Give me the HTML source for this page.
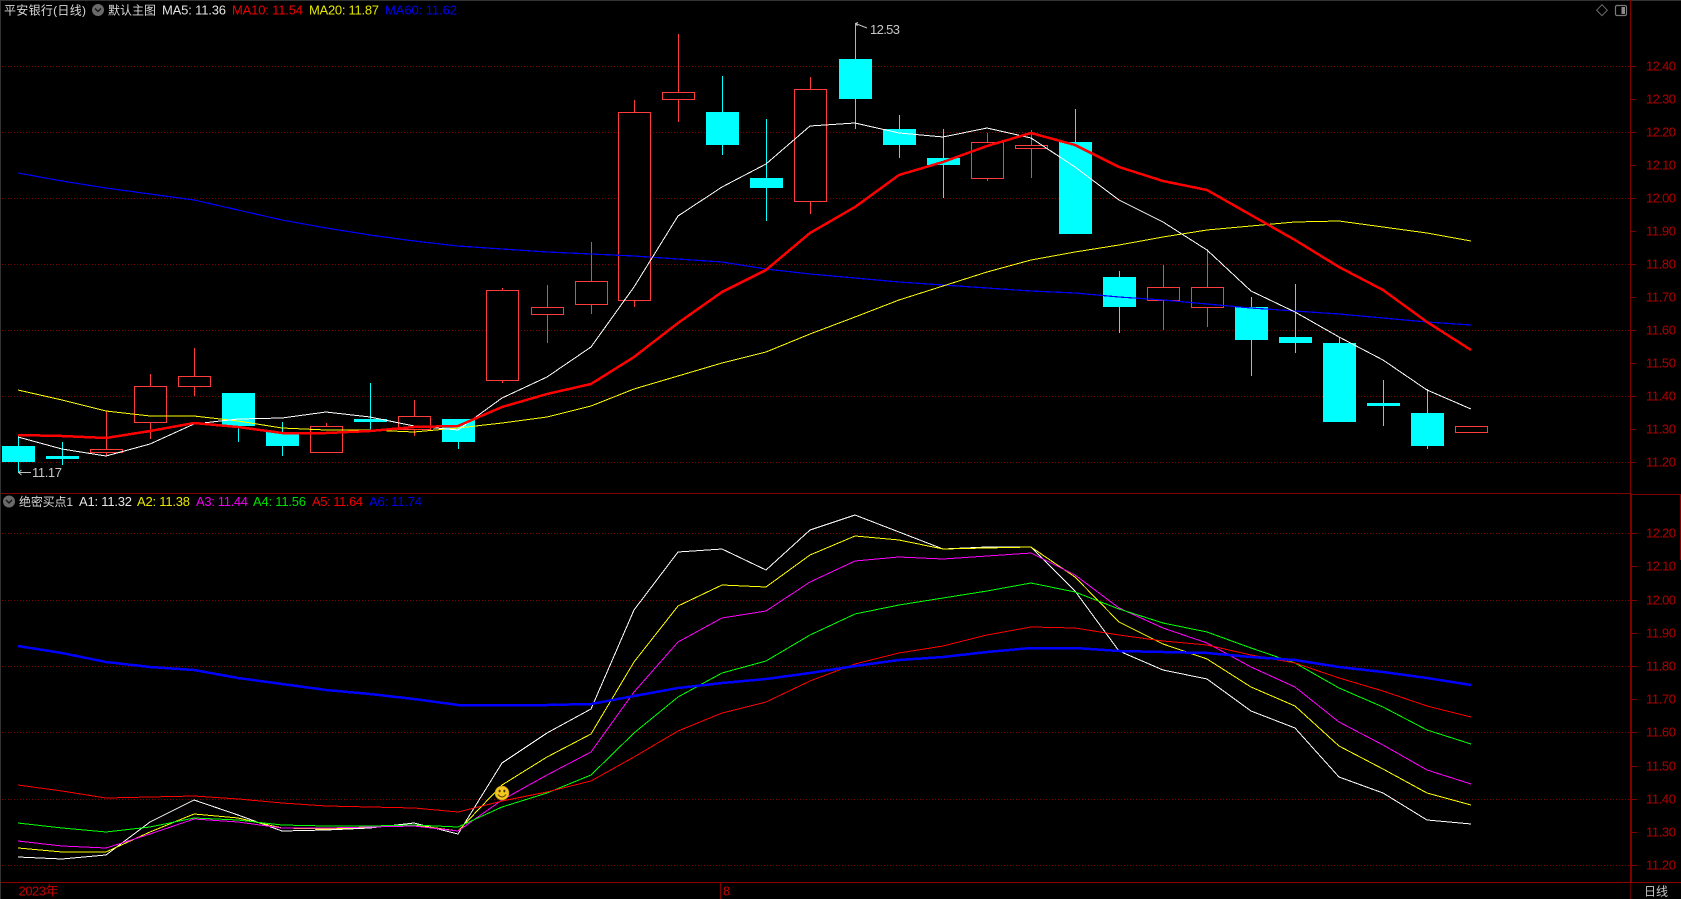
<!DOCTYPE html>
<html lang="zh">
<head>
<meta charset="utf-8">
<title>平安银行(日线)</title>
<style>
html,body{margin:0;padding:0;background:#000;width:1681px;height:899px;overflow:hidden}
svg{display:block;position:absolute;left:0;top:0}
text{font-family:"Liberation Sans","Noto Sans CJK SC",sans-serif;font-size:13px}
.g{stroke:#800000;stroke-width:1;stroke-dasharray:1 2;fill:none}
.l{fill:none;stroke-width:1;shape-rendering:crispEdges;stroke-linejoin:round}
.c{shape-rendering:crispEdges}
.ax text{fill:#b00000;font-size:13px}
</style>
</head>
<body>
<svg width="1681" height="899" viewBox="0 0 1681 899" xmlns="http://www.w3.org/2000/svg">
<rect width="1681" height="899" fill="#000"/>
<!-- frame -->
<g class="c">
<rect x="0" y="0" width="1681" height="1" fill="#333"/>
<rect x="0" y="0" width="1" height="899" fill="#333"/>
<rect x="1630" y="0" width="1" height="494" fill="#800000"/>
<rect x="1630" y="494" width="2" height="388" fill="#800000"/>
<rect x="1630" y="882" width="1" height="17" fill="#600000"/>
<rect x="1" y="493" width="1630" height="1" fill="#800000"/>
<rect x="1631" y="494" width="50" height="1" fill="#800000"/>
<rect x="1680" y="494" width="1" height="66" fill="#800000"/>
<rect x="1" y="882" width="1680" height="1" fill="#900000"/>
<rect x="720" y="882" width="1" height="17" fill="#800000"/>
</g>
<!-- grid -->
<g class="c">
<path class="g" d="M2 66.5H1630M2 132.5H1630M2 198.5H1630M2 264.5H1630M2 330.5H1630M2 396.5H1630M2 462.5H1630M2 533.5H1630M2 600.5H1630M2 666.5H1630M2 732.5H1630M2 799.5H1630M2 865.5H1630"/>
<path stroke="#800000" stroke-width="1" fill="none" d="M1631 66.5h5M1631 99.5h5M1631 132.5h5M1631 165.5h5M1631 198.5h5M1631 231.5h5M1631 264.5h5M1631 297.5h5M1631 330.5h5M1631 363.5h5M1631 396.5h5M1631 429.5h5M1631 462.5h5M1632 533.5h5M1632 566.5h5M1632 600.5h5M1632 633.5h5M1632 666.5h5M1632 699.5h5M1632 732.5h5M1632 766.5h5M1632 799.5h5M1632 832.5h5M1632 865.5h5"/>
</g>
<!-- axis labels -->
<g class="ax">
<text x="1646" y="70.5" textLength="30">12.40</text>
<text x="1646" y="103.5" textLength="30">12.30</text>
<text x="1646" y="136.5" textLength="30">12.20</text>
<text x="1646" y="169.5" textLength="30">12.10</text>
<text x="1646" y="202.5" textLength="30">12.00</text>
<text x="1646" y="235.5" textLength="30">11.90</text>
<text x="1646" y="268.5" textLength="30">11.80</text>
<text x="1646" y="301.5" textLength="30">11.70</text>
<text x="1646" y="334.5" textLength="30">11.60</text>
<text x="1646" y="367.5" textLength="30">11.50</text>
<text x="1646" y="400.5" textLength="30">11.40</text>
<text x="1646" y="433.5" textLength="30">11.30</text>
<text x="1646" y="466.5" textLength="30">11.20</text>
<text x="1646" y="537.5" textLength="30">12.20</text>
<text x="1646" y="570.5" textLength="30">12.10</text>
<text x="1646" y="604.5" textLength="30">12.00</text>
<text x="1646" y="637.5" textLength="30">11.90</text>
<text x="1646" y="670.5" textLength="30">11.80</text>
<text x="1646" y="703.5" textLength="30">11.70</text>
<text x="1646" y="736.5" textLength="30">11.60</text>
<text x="1646" y="770.5" textLength="30">11.50</text>
<text x="1646" y="803.5" textLength="30">11.40</text>
<text x="1646" y="836.5" textLength="30">11.30</text>
<text x="1646" y="869.5" textLength="30">11.20</text>
<text x="18.5" y="895.5" textLength="40" style="fill:#c00000">2023年</text>
<text x="723" y="895.5" style="fill:#c00000">8</text>
</g>
<text x="1644" y="895.5" textLength="24" fill="#c8c8c8" style="font-size:12px">日线</text>
<!-- red wicks -->
<path class="c" fill="none" stroke="#ff3c3c" stroke-width="1" d="M106.5 411V456M150.5 374V439M194.5 348V396M326.5 423V453M414.5 400V436M502.5 288V383M547.5 285V343M591.5 242V314M634.5 100V307M678.5 34V122M810.5 77V214M987.5 133V181M1031.5 130V178M1163.5 265V330M1207.5 249V327"/>
<!-- cyan wicks -->
<path class="c" fill="none" stroke="#00ffff" stroke-width="1" d="M18.5 435V473M62.5 442V465M238.5 393V442M282.5 422V456M370.5 383V430M458.5 419V449M722.5 76V155M766.5 119V221M855.5 23V129M899.5 115V158M943.5 129V198M1075.5 109V234M1119.5 271V333M1251.5 297V376M1295.5 284V353M1339.5 337V422M1383.5 380V426M1427.5 389V449"/>
<!-- red bodies -->
<g class="c" fill="#000" stroke="#ff3c3c" stroke-width="1">
<rect x="90.5" y="449.5" width="32" height="3"/>
<rect x="134.5" y="386.5" width="32" height="36"/>
<rect x="178.5" y="376.5" width="32" height="10"/>
<rect x="310.5" y="426.5" width="32" height="26"/>
<rect x="398.5" y="416.5" width="32" height="13"/>
<rect x="486.5" y="290.5" width="32" height="90"/>
<rect x="531.5" y="307.5" width="32" height="7"/>
<rect x="575.5" y="281.5" width="32" height="23"/>
<rect x="618.5" y="112.5" width="32" height="188"/>
<rect x="662.5" y="92.5" width="32" height="7"/>
<rect x="794.5" y="89.5" width="32" height="112"/>
<rect x="971.5" y="142.5" width="32" height="36"/>
<rect x="1015.5" y="145.5" width="32" height="3"/>
<rect x="1147.5" y="287.5" width="32" height="13"/>
<rect x="1191.5" y="287.5" width="32" height="20"/>
<rect x="1455.5" y="426.5" width="32" height="6"/>
</g>
<!-- cyan bodies -->
<g class="c" fill="#00ffff">
<rect x="2" y="446" width="33" height="16"/>
<rect x="46" y="456" width="33" height="3"/>
<rect x="222" y="393" width="33" height="33"/>
<rect x="266" y="432" width="33" height="14"/>
<rect x="354" y="419" width="33" height="3"/>
<rect x="442" y="419" width="33" height="23"/>
<rect x="706" y="112" width="33" height="33"/>
<rect x="750" y="178" width="33" height="10"/>
<rect x="839" y="59" width="33" height="40"/>
<rect x="883" y="129" width="33" height="16"/>
<rect x="927" y="158" width="33" height="7"/>
<rect x="1059" y="142" width="33" height="92"/>
<rect x="1103" y="277" width="33" height="30"/>
<rect x="1235" y="307" width="33" height="33"/>
<rect x="1279" y="337" width="33" height="6"/>
<rect x="1323" y="343" width="33" height="79"/>
<rect x="1367" y="403" width="33" height="3"/>
<rect x="1411" y="413" width="33" height="33"/>
</g>
<!-- MA lines -->
<polyline class="l" stroke="#0000ff" style="stroke-width:1.2" points="18,173 62,181 106,188 150,194 194,200 238,210 282,220 326,228 370,235 414,241 458,246 502,249 547,252 591,254 634,256 678,259 722,262 766,269 810,274 855,278 899,282 943,285 987,288 1031,291 1075,293 1119,297 1163,300 1207,304 1251,308 1295,311 1339,314 1383,318 1427,322 1471,325"/>
<polyline class="l" stroke="#ffff00" points="18,390 62,400 106,411 150,416 194,416 238,421 282,428 326,430 370,430 414,432 458,428 502,423 547,417 591,406 634,389 678,376 722,363 766,352 810,334 855,317 899,300 943,286 987,272 1031,260 1075,252 1119,245 1163,237 1207,230 1251,226 1295,222 1339,221 1383,227 1427,233 1471,241"/>
<polyline class="l" stroke="#ffffff" points="18,437 62,449 106,456 150,444 194,424 238,419 282,418 326,412 370,417 414,426 458,430 502,398 547,377 591,347 634,287 678,216 722,187 766,164 810,126 855,123 899,133 943,137 987,128 1031,138 1075,167 1119,200 1163,222 1207,250 1251,291 1295,312 1339,337 1383,360 1427,390 1471,409"/>
<polyline class="l" stroke="#ff0000" style="stroke-width:2.5" points="18,435 62,436 106,438 150,431 194,423 238,427 282,433 326,433 370,431 414,427 458,426 502,407 547,394 591,384 634,357 678,323 722,292 766,270 810,233 855,207 899,175 943,162 987,146 1031,133 1075,145 1119,167 1163,181 1207,190 1251,215 1295,240 1339,267 1383,290 1427,322 1471,350"/>
<!-- sub-panel lines -->
<polyline class="l" stroke="#ffffff" points="18,857 62,859 106,855 150,822 194,800 238,815 282,831 326,830 370,828 414,823 458,834 502,763 547,733 591,709 634,610 678,552 722,549 766,570 810,530 855,515 899,532 943,549 987,547 1031,547 1075,591 1119,651 1163,670 1207,679 1251,711 1295,728 1339,777 1383,793 1427,820 1471,824"/>
<polyline class="l" stroke="#ffff00" points="18,848 62,852 106,852 150,832 194,814 238,818 282,828 326,829 370,827 414,825 458,831 502,785 547,757 591,734 634,662 678,606 722,585 766,587 810,555 855,536 899,540 943,549 987,548 1031,547 1075,577 1119,622 1163,644 1207,659 1251,687 1295,706 1339,746 1383,769 1427,793 1471,805"/>
<polyline class="l" stroke="#ff00ff" points="18,841 62,846 106,848 150,834 194,819 238,822 282,828 326,828 370,827 414,826 458,831 502,800 547,775 591,752 634,692 678,642 722,618 766,611 810,582 855,561 899,557 943,559 987,556 1031,553 1075,575 1119,608 1163,628 1207,643 1251,667 1295,687 1339,722 1383,745 1427,770 1471,784"/>
<polyline class="l" stroke="#00ff00" points="18,823 62,828 106,832 150,827 194,818 238,820 282,825 326,826 370,826 414,825 458,827 502,807 547,793 591,775 634,733 678,697 722,673 766,661 810,635 855,614 899,605 943,598 987,591 1031,583 1075,592 1119,609 1163,623 1207,632 1251,648 1295,663 1339,688 1383,707 1427,730 1471,744"/>
<polyline class="l" stroke="#ff0000" points="18,785 62,791 106,798 150,797 194,796 238,799 282,803 326,806 370,807 414,808 458,812 502,801 547,792 591,781 634,757 678,731 722,713 766,702 810,681 855,664 899,653 943,646 987,635 1031,627 1075,628 1119,635 1163,641 1207,645 1251,655 1295,663 1339,678 1383,691 1427,706 1471,717"/>
<polyline class="l" stroke="#0000ff" style="stroke-width:2.5" points="18,646 62,653 106,662 150,667 194,670 238,678 282,684 326,690 370,694 414,699 458,705 502,705 547,705 591,704 634,696 678,688 722,683 766,679 810,673 855,666 899,660 943,657 987,652 1031,648 1075,648 1119,651 1163,652 1207,653 1251,657 1295,660 1339,667 1383,672 1427,678 1471,685"/>
<!-- smiley -->
<circle cx="502" cy="793" r="7" fill="#f2c81e" stroke="#b88a10" stroke-width=".6"/>
<ellipse cx="499.6" cy="791" rx="1" ry="1.4" fill="#4a3200"/>
<ellipse cx="504.4" cy="791" rx="1" ry="1.4" fill="#4a3200"/>
<path d="M498 794.5Q502 799.5 506 794.5" fill="none" stroke="#4a3200" stroke-width="1"/>
<!-- price callouts -->
<path d="M855.5 23.5L867 28M855.5 23.5l2.5 -1M855.5 23.5l2 2.5" stroke="#c0c0c0" stroke-width="1" fill="none"/>
<text x="870" y="34" textLength="30" fill="#c8c8c8">12.53</text>
<path d="M18.5 472.5H31M18.5 472.5l3 -2.5M18.5 472.5l3 2.5" stroke="#c0c0c0" stroke-width="1" fill="none"/>
<text x="32" y="477" textLength="30" fill="#c8c8c8">11.17</text>
<!-- top header -->
<text x="4" y="14.5" textLength="82" fill="#d8d8d8" style="font-size:12px">平安银行(日线)</text>
<circle cx="98" cy="10" r="6" fill="#6a6a6a"/>
<path d="M95 8.5L98 11.5L101 8.5" fill="none" stroke="#111" stroke-width="1.3"/>
<text x="108" y="14.5" textLength="48" fill="#d8d8d8" style="font-size:12px">默认主图</text>
<text x="162" y="14.5" textLength="64" fill="#e4e4e4">MA5: 11.36</text>
<text x="232" y="14.5" textLength="71" fill="#f00000">MA10: 11.54</text>
<text x="309" y="14.5" textLength="70" fill="#e8e800">MA20: 11.87</text>
<text x="385" y="14.5" textLength="72" fill="#0000f0">MA60: 11.62</text>
<!-- top right icons -->
<path d="M1602 4.7L1607.3 10.2L1602 15.7L1596.7 10.2Z" fill="none" stroke="#6e6e6e" stroke-width="1"/>
<rect x="1615.5" y="5.5" width="11" height="10" rx="1.5" fill="none" stroke="#7a7a7a" stroke-width="1.2"/>
<rect x="1621.5" y="7" width="3.5" height="7" fill="#8a8a8a"/>
<!-- sub header -->
<circle cx="9" cy="501.5" r="6" fill="#6a6a6a"/>
<path d="M6 500L9 503L12 500" fill="none" stroke="#111" stroke-width="1.3"/>
<text x="19" y="506" textLength="54" fill="#d8d8d8" style="font-size:12px">绝密买点1</text>
<text x="79" y="506" textLength="53" fill="#e4e4e4">A1: 11.32</text>
<text x="137" y="506" textLength="53" fill="#e8e800">A2: 11.38</text>
<text x="196" y="506" textLength="52" fill="#f000f0">A3: 11.44</text>
<text x="253" y="506" textLength="53" fill="#00e000">A4: 11.56</text>
<text x="312" y="506" textLength="51" fill="#f00000">A5: 11.64</text>
<text x="369" y="506" textLength="53" fill="#0000f0">A6: 11.74</text>
</svg>
</body>
</html>
